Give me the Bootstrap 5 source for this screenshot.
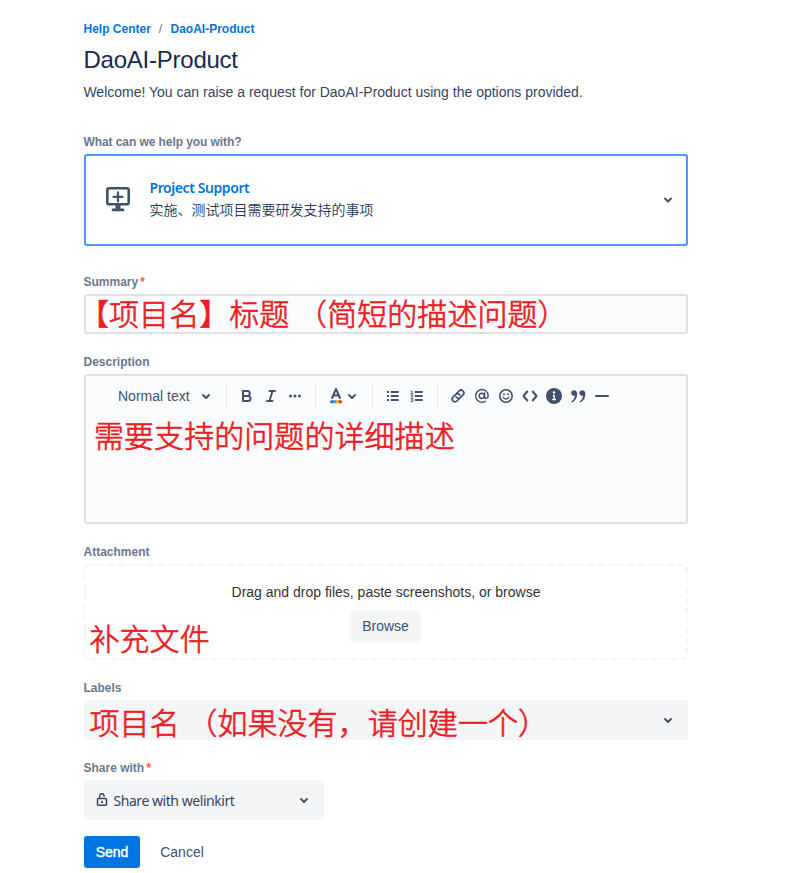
<!DOCTYPE html>
<html lang="en">
<head>
<meta charset="utf-8">
<meta name="viewport" content="width=device-width, initial-scale=1">
<title>DaoAI-Product</title>
<link href="https://cdn.jsdelivr.net/npm/bootstrap@5.3.0/dist/css/bootstrap.min.css" rel="stylesheet">
<style>
body{font-family:"Liberation Sans","Noto Sans CJK SC",sans-serif;font-size:14px;line-height:20px;color:#172b4d;background:#fff}
.portal{width:604px;margin-left:84px;padding-top:18px}
.crumbs{font-size:12px;font-weight:700;height:20px;line-height:22px;gap:8px;margin-left:-.5px}
.crumbs a,.req-title{color:#0074e0;text-decoration:none}
.crumbs span{color:#6b778c;font-weight:400;font-size:13px}
h1{font-size:24px;line-height:28px;font-weight:400;margin:8px 0;letter-spacing:-.24px;text-indent:-.5px}
.welcome{height:20px;color:#344563;text-indent:-.6px}
.flabel{display:block;font-size:12px;line-height:16px;font-weight:700;color:#6b778c;margin-bottom:4px;text-indent:-.5px}
.flabel i{color:#ff5630;font-style:normal;font-weight:700;margin-left:2px}
.ask{letter-spacing:-.08px}
.request-block{margin-top:32px}
.summary-block{margin-top:28px}
.field{margin-top:20px}
.request{height:92px;border:2px solid #4c9aff;border-radius:3px;padding:0 6px 2px 20px}
.req-title{font:600 14px/20px "Noto Sans",sans-serif;letter-spacing:-.42px}
.req-text{font:350 14px/22px "Noto Sans CJK SC",sans-serif;color:#253858}
.req-body{margin-left:19.5px}
.box-line{border:2px solid #dfe1e6;border-radius:3px;background:#fafbfc}
.summary-box{height:40px}
.editor-box{height:150px}
.box-fill{background:#f4f5f7;border-radius:3px;height:40px}
.note{font:300 30px/36px "Noto Sans CJK SC",sans-serif;color:#ed1c24;white-space:nowrap;word-spacing:1px;letter-spacing:.06px;-webkit-text-stroke:.7px #ed1c24}
.summary-note{margin:-2px 0 0 -7px}
.editor-note{margin:0 0 0 8px}
.drop{height:96px}
.drop-text{padding-top:18px;height:46px;color:#333}
.drop-note{left:5.5px;top:55px}
.browse{height:32px;width:71px;background:#f4f5f7;border-radius:3px;color:#42526e;line-height:32px;padding:0;border:0;font-size:14px;margin-left:-1px}
.tools{height:40px;padding-left:32px;color:#42526e}
.style-name{width:76px}
.tools .rule{width:1px;height:24px;background:#e6e8ec;margin:0 8px}
.ico{width:24px;height:24px;fill:none;stroke:#42526e;stroke-width:2;stroke-linecap:round;stroke-linejoin:round;flex:none;display:block}
.ico .f{fill:#42526e;stroke:none}
.labels-box{padding:0 8px 0 5.5px}
.labels-note{margin-top:2px}
.share{width:240px;padding:0 8px 0 12px}
.share span{font:14px/20px "Noto Sans",sans-serif;letter-spacing:-.45px;color:#344563;margin:2px 0 0 5.5px}
.act{height:32px;line-height:32px;padding:0;border:0;border-radius:3px;font-size:14px}
.send{width:56px;background:#0074e0;color:#fff;-webkit-text-stroke:.4px #fff}
.cancel{width:84px;color:#42526e}
</style>
</head>
<body>
<svg width="0" height="0" class="position-absolute"><defs><path id="chev" d="M8.292 10.293a1.009 1.009 0 000 1.419l2.939 2.965c.218.215.5.322.779.322s.556-.107.769-.322l2.93-2.955a1.01 1.01 0 000-1.419.987.987 0 00-1.406 0l-2.298 2.317-2.307-2.327a.99.99 0 00-1.406 0z"/></defs></svg>
<main class="portal">
  <nav class="crumbs d-flex"><a href="#">Help Center</a><span>/</span><a href="#">DaoAI-Product</a></nav>
  <h1>DaoAI-Product</h1>
  <p class="welcome mb-0">Welcome! You can raise a request for DaoAI-Product using the options provided.</p>

  <section class="request-block">
    <span class="flabel ask">What can we help you with?</span>
    <div class="request d-flex align-items-center">
      <svg width="24" height="26" viewBox="0 0 24 26" fill="none" stroke="#42526e" stroke-width="2.6"><rect x="1.3" y="2.3" width="21.4" height="16" rx="1.8"/><path d="M12 6.300v9M7.500 10.800h9" stroke-linecap="round" stroke-width="2.200"/><path d="M9.500 18h5v4.500H17a1.300 1.300 0 010 2.800H7a1.300 1.300 0 010-2.800h2.500z" fill="#42526e" stroke="none"/></svg>
      <div class="req-body flex-grow-1"><div class="req-title">Project Support</div><div class="req-text">实施、测试项目需要研发支持的事项</div></div>
      <svg class="ico" viewBox="0 0 24 24"><use href="#chev" class="f" y=".5"/></svg>
    </div>
  </section>

  <section class="summary-block">
    <label class="flabel">Summary<i>*</i></label>
    <div class="box-line summary-box"><div class="note summary-note">【项目名】标题 （简短的描述问题）</div></div>
  </section>

  <section class="field">
    <label class="flabel">Description</label>
    <div class="box-line editor-box">
      <div class="tools d-flex align-items-center">
        <span class="style-name">Normal text</span>
        <svg class="ico" viewBox="0 0 24 24"><use href="#chev" class="f"/></svg>
        <span class="rule"></span>
        <svg class="ico" viewBox="0 0 24 24"><path d="M8 7h4.300a2.400 2.400 0 010 4.900H8zM8 11.900h5a2.550 2.550 0 010 5.100H8z"/></svg>
        <svg class="ico" viewBox="0 0 24 24"><path d="M10.500 7H16M8 17h5.500M13.500 7l-3 10" stroke-width="1.900"/></svg>
        <svg class="ico" viewBox="0 0 24 24"><g class="f"><circle cx="7.500" cy="12" r="1.500"/><circle cx="12" cy="12" r="1.500"/><circle cx="16.500" cy="12" r="1.500"/></g></svg>
        <span class="rule"></span>
        <svg class="ico" viewBox="0 0 24 24"><path d="M8.100 14L12 5l3.900 9M9.500 11.500h5" stroke-width="2"/><g stroke="none"><path d="M7.500 16.200H9v3H7.500a1.500 1.500 0 010-3z" fill="#6554c0"/><path d="M9 16.200h3v3H9z" fill="#00b8d9"/><path d="M12 16.200h3v3h-3z" fill="#ff991f"/><path d="M15 16.200h1.500a1.500 1.500 0 010 3H15z" fill="#de350b"/></g></svg>
        <svg class="ico ms-n2" style="margin-left:-8px" viewBox="0 0 24 24"><use href="#chev" class="f"/></svg>
        <span class="rule"></span>
        <svg class="ico" viewBox="0 0 24 24"><path d="M10.500 8H17M10.500 12H17M10.500 16H17" stroke-width="1.800"/><g class="f"><path d="M6 7h2v2H6zM6 11h2v2H6zM6 15h2v2H6z"/></g></svg>
        <svg class="ico" viewBox="0 0 24 24"><path d="M10.500 8H17M10.500 12H17M10.500 16H17" stroke-width="1.800"/><path d="M6 7h1v2.500M6 9.700h2M6 11.200h1.700L6.300 13H8M6 14.600h1.700v3H6M6.500 16h1" stroke-width=".9"/></svg>
        <span class="rule"></span>
        <svg class="ico" viewBox="0 0 24 24"><g transform="rotate(-45 12 12)" stroke-width="1.700"><path d="M11 14.800H7.700a2.800 2.800 0 010-5.600h3.500a2.800 2.800 0 012.700 3.500"/><path d="M13 9.200h3.300a2.800 2.800 0 010 5.600h-3.500a2.800 2.800 0 01-2.700-3.500"/></g></svg>
        <svg class="ico" viewBox="0 0 24 24"><g stroke-width="1.500"><circle cx="11.800" cy="11.800" r="2.600"/><path d="M14.500 9v3.500c0 2.500 3.700 2.200 3.700-.7a6.300 6.300 0 10-3 5.500"/></g></svg>
        <svg class="ico" viewBox="0 0 24 24"><circle cx="12" cy="12" r="6.200" stroke-width="1.600"/><path d="M9.200 13.300c1 2.300 4.600 2.300 5.600 0" stroke-width="1.400"/><g class="f"><circle cx="10" cy="10.300" r="1"/><circle cx="14" cy="10.300" r="1"/></g></svg>
        <svg class="ico" viewBox="0 0 24 24"><path d="M9.300 7.500L5.500 12l3.800 4.500M14.700 7.500l3.800 4.500-3.800 4.500"/></svg>
        <svg class="ico" viewBox="0 0 24 24"><circle cx="12" cy="12" r="8" class="f"/><circle cx="12" cy="8.500" r="1.200" fill="#fff" stroke="none"/><path d="M11.300 11.500h.9v3.500M10.800 15.500h2.600" stroke="#fff" stroke-width="1.400"/></svg>
        <svg class="ico" viewBox="0 0 24 24"><g class="f"><path id="q" d="M8 6.200a2.900 2.900 0 00-2.800 2.900c0 1.700 1.200 2.800 2.800 2.800.3 0 .6 0 .9-.1-.4 2.400-1.500 4.200-3.300 5.400-.8.700 0 1.400.8 1 3.300-1.800 4.800-4.800 4.800-8.300C11.200 7.700 10 6.200 8 6.200z"/><use href="#q" x="8.200"/></g></svg>
        <svg class="ico" viewBox="0 0 24 24"><path d="M6 12h12"/></svg>
      </div>
      <div class="note editor-note">需要支持的问题的详细描述</div>
    </div>
  </section>

  <section class="field">
    <label class="flabel">Attachment</label>
    <div class="drop position-relative text-center">
      <svg class="position-absolute top-0 start-0" width="604" height="96" fill="none"><rect x="1" y="1" width="602" height="94" rx="3" stroke="#f4f5f7" stroke-width="2" stroke-dasharray="6 4"/></svg>
      <div class="drop-text">Drag and drop files, paste screenshots, or browse</div>
      <button class="btn browse" type="button">Browse</button>
      <div class="note drop-note position-absolute">补充文件</div>
    </div>
  </section>

  <section class="field">
    <label class="flabel">Labels</label>
    <div class="box-fill labels-box d-flex align-items-center justify-content-between"><div class="note labels-note">项目名 （如果没有，请创建一个）</div><svg class="ico" viewBox="0 0 24 24"><use href="#chev" class="f"/></svg></div>
  </section>

  <section class="field">
    <label class="flabel">Share with<i>*</i></label>
    <div class="box-fill share d-flex align-items-center">
      <svg width="12" height="14" viewBox="0 0 12 14" fill="none" stroke="#344563" stroke-width="1.500"><rect x="1.500" y="5.500" width="9" height="6.800" rx="1"/><path d="M3.700 5.500V3a2.200 2.200 0 014.400 0v.8" stroke-width="1.400"/><circle cx="6" cy="8.900" r="1.100" fill="#344563" stroke="none"/></svg>
      <span class="flex-grow-1">Share with welinkirt</span>
      <svg class="ico" viewBox="0 0 24 24"><use href="#chev" class="f"/></svg>
    </div>
  </section>
  <div class="d-flex mt-3"><button class="btn act send" type="button">Send</button><button class="btn act cancel" type="button">Cancel</button></div>
</main>
<script src="https://cdn.jsdelivr.net/npm/bootstrap@5.3.0/dist/js/bootstrap.bundle.min.js"></script>
</body>
</html>
